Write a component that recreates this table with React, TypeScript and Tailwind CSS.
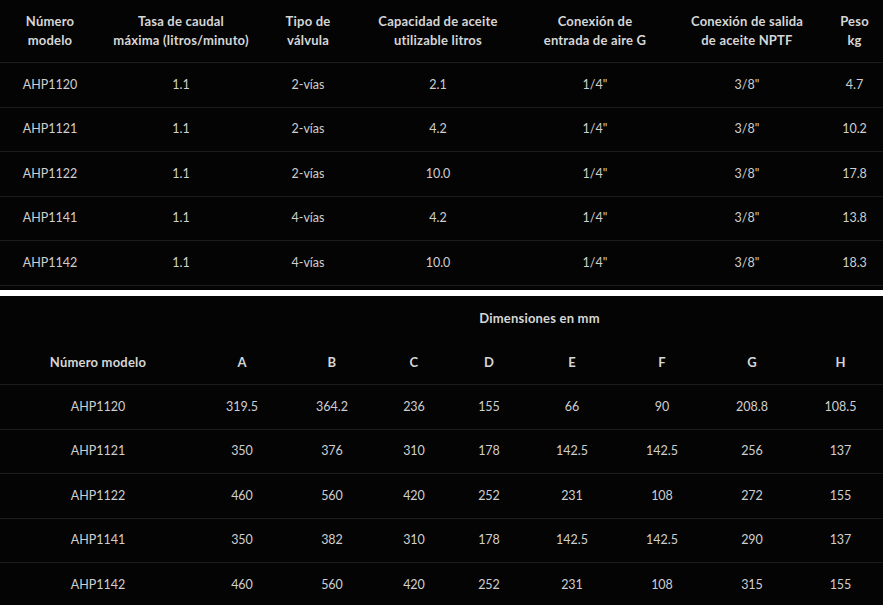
import React from "react";

const t1 = [
  ["AHP1120", "1.1", "2-vías", "2.1", "1/4\"", "3/8\"", "4.7"],
  ["AHP1121", "1.1", "2-vías", "4.2", "1/4\"", "3/8\"", "10.2"],
  ["AHP1122", "1.1", "2-vías", "10.0", "1/4\"", "3/8\"", "17.8"],
  ["AHP1141", "1.1", "4-vías", "4.2", "1/4\"", "3/8\"", "13.8"],
  ["AHP1142", "1.1", "4-vías", "10.0", "1/4\"", "3/8\"", "18.3"],
];

const t2 = [
  ["AHP1120", "319.5", "364.2", "236", "155", "66", "90", "208.8", "108.5"],
  ["AHP1121", "350", "376", "310", "178", "142.5", "142.5", "256", "137"],
  ["AHP1122", "460", "560", "420", "252", "231", "108", "272", "155"],
  ["AHP1141", "350", "382", "310", "178", "142.5", "142.5", "290", "137"],
  ["AHP1142", "460", "560", "420", "252", "231", "108", "315", "155"],
];

const g1 = "grid grid-cols-[100px_162px_92px_168px_146px_158px_57px]";
const g2 = "grid grid-cols-[196px_92px_88px_76px_74px_92px_88px_92px_85px]";

export default function App() {
  return (
    <div
      className="w-[883px] h-[605px] overflow-hidden bg-[#040404] text-[#cfcfcf]"
      style={{ fontFamily: "Lato, 'Liberation Sans', sans-serif" }}
    >
      {/* Table 1 */}
      <div className={`${g1} h-[63px] border-b border-[#1c1c1c] items-center text-[13px] font-bold leading-[19px] tracking-[0.2px] text-[#d6d6d6]`}>
        <div className="text-center">Número<br />modelo</div>
        <div className="text-center">Tasa de caudal<br />máxima (litros/minuto)</div>
        <div className="text-center">Tipo de<br />válvula</div>
        <div className="text-center">Capacidad de aceite<br />utilizable litros</div>
        <div className="text-center">Conexión de<br />entrada de aire G</div>
        <div className="text-center">Conexión de salida<br />de aceite NPTF</div>
        <div className="text-center">Peso<br />kg</div>
      </div>
      {t1.map((r, i) => (
        <div key={i} className={`${g1} h-[44.5px] border-b border-[#1c1c1c] items-center text-[12.5px] pt-[1px]`}>
          {r.map((c, j) => (
            <div key={j} className="text-center">{c}</div>
          ))}
        </div>
      ))}
      <div className="h-[4.5px]" />
      <div className="h-[6px] bg-white" />

      {/* Table 2 */}
      <div className={`${g2} h-[45px] items-center text-[13px] font-bold tracking-[0.2px] text-[#d6d6d6]`}>
        <div />
        <div className="col-span-8 text-center">Dimensiones en mm</div>
      </div>
      <div className={`${g2} h-[44px] border-b border-[#1c1c1c] items-center text-[13px] font-bold tracking-[0.2px] text-[#d6d6d6]`}>
        <div className="text-center">Número modelo</div>
        {["A", "B", "C", "D", "E", "F", "G", "H"].map((h) => (
          <div key={h} className="text-center">{h}</div>
        ))}
      </div>
      {t2.map((r, i) => (
        <div key={i} className={`${g2} h-[44.5px] border-b border-[#1c1c1c] items-center text-[12.5px] pt-[1px]`}>
          {r.map((c, j) => (
            <div key={j} className="text-center">{c}</div>
          ))}
        </div>
      ))}
    </div>
  );
}
